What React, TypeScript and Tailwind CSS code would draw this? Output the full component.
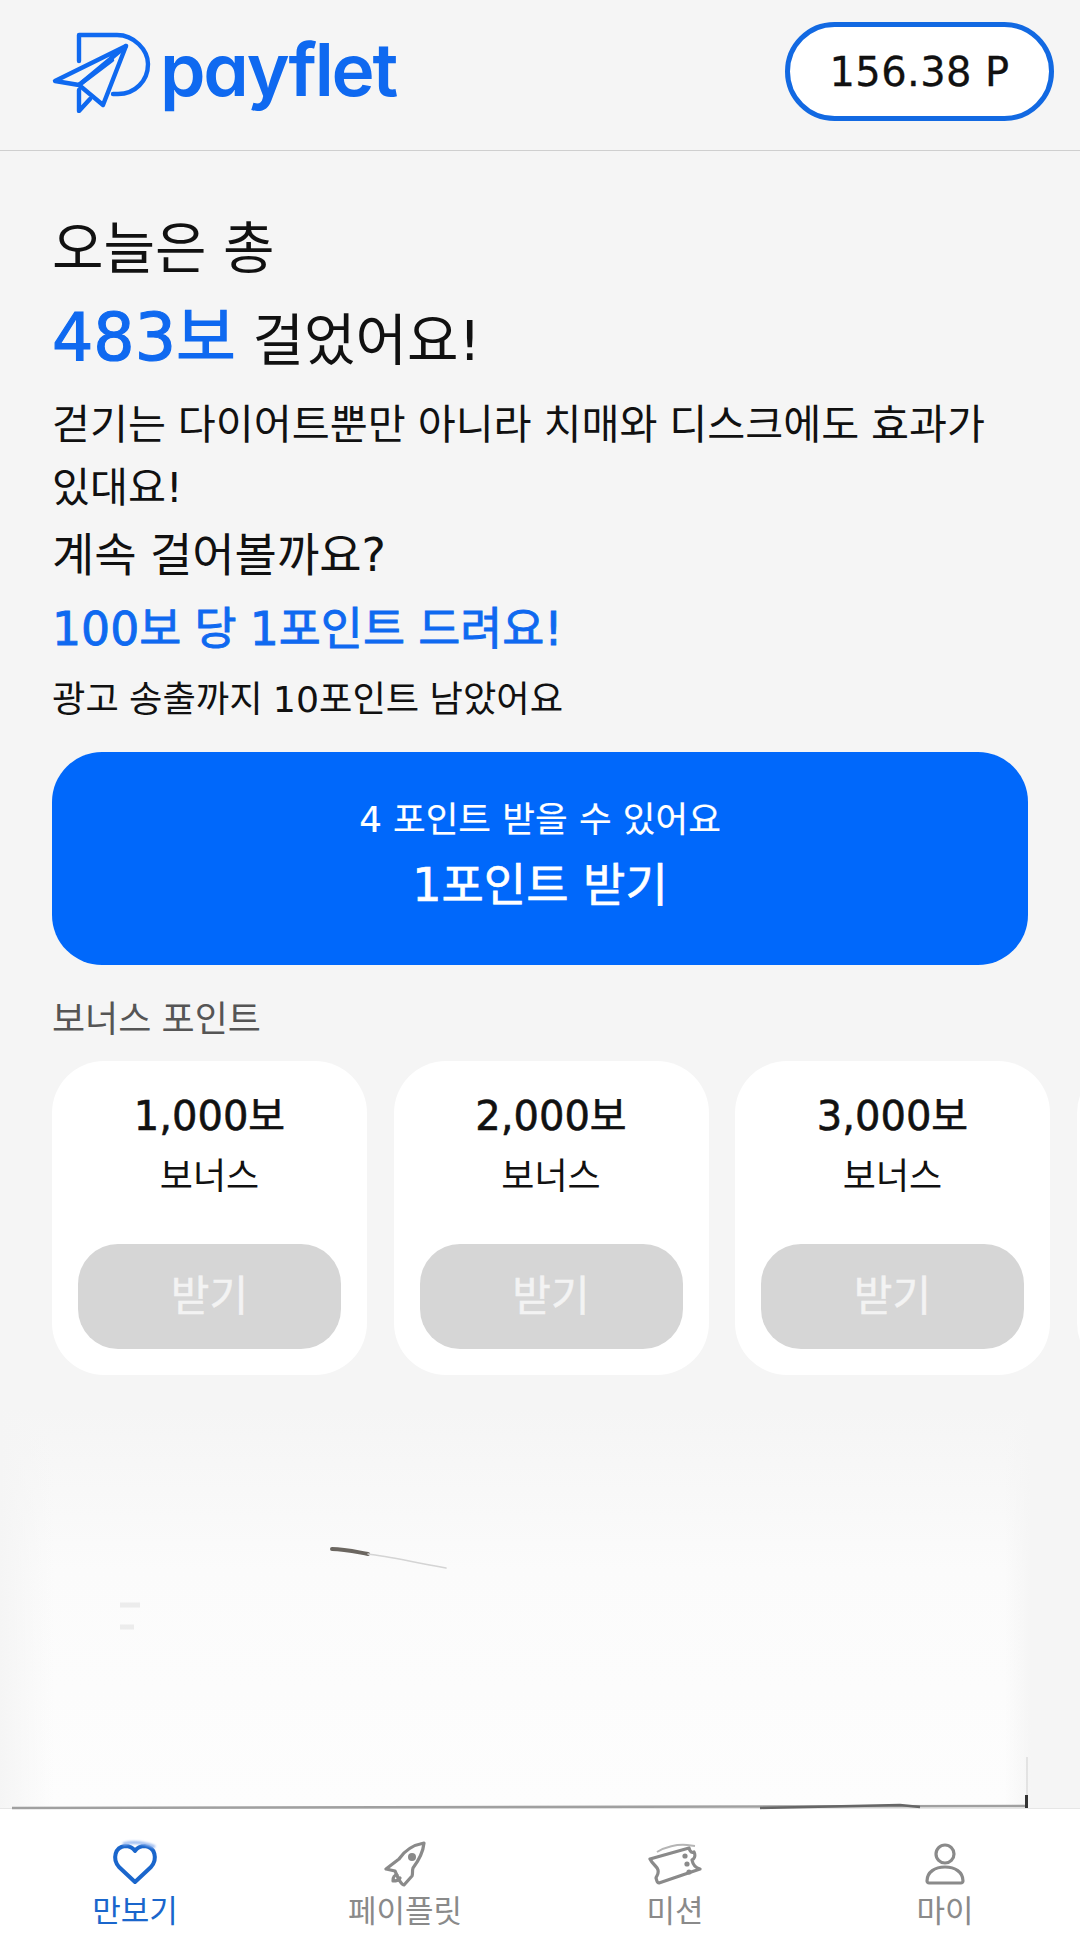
const bonusSteps = ['1,000보', '2,000보', '3,000보'];

function Logo() {
  return (
    <div className="flex items-center">
      <svg width="100" height="82" viewBox="0 0 100 82" fill="none" stroke="#0f69f0" strokeWidth="4.4" strokeLinecap="round" strokeLinejoin="round" className="shrink-0">
        <path d="M27 30V4h38c17 0 31 15 31 29 0 17-13 30-30 30h-5" />
        <path d="M74 15 3 50l24 4z" />
        <path d="M60 29 27 54" />
        <path d="M27 54l24 20 23-59" />
        <path d="M27 59v21l11-12" />
      </svg>
      <span className="ml-[8px] -mt-[6px] text-[73px] leading-none font-semibold tracking-[-2.2px] text-[#0f69f0] [font-family:'Inter',sans-serif] [font-feature-settings:'cv11']">payflet</span>
    </div>
  );
}

function BonusCard({ label }: { label: string }) {
  return (
    <div className="flex h-[314px] w-[315px] shrink-0 flex-col items-center rounded-[52px] bg-white px-[26px] pt-[30px]">
      <p className="text-[40px] leading-[50px] text-[#111] [-webkit-text-stroke-width:0.6px]">{label}</p>
      <p className="mt-[12px] text-[36px] leading-[48px] text-[#111]">보너스</p>
      <button className="mt-auto mb-[26px] h-[105px] w-full rounded-[40px] bg-[#d6d6d6] text-[42px] text-[#f3f3f3] [-webkit-text-stroke-width:0.5px]">받기</button>
    </div>
  );
}

function NavItem({ label, active, children }: { label: string; active?: boolean; children: React.ReactNode }) {
  return (
    <div className="flex flex-col items-center">
      <div className="flex h-[46px] items-center justify-center">{children}</div>
      <span className={active ? 'mt-[4px] text-[31px] leading-[40px] text-[#1a66cc]' : 'mt-[4px] text-[31px] leading-[40px] text-[#8a8a8a]'}>{label}</span>
    </div>
  );
}

export default function App() {
  return (
    <div className="flex h-[1945px] w-[1080px] flex-col overflow-hidden bg-[#f5f5f5] [word-spacing:-0.08em] [font-family:'DejaVu_Sans','Noto_Sans_CJK_KR',sans-serif]">
      <header className="flex h-[151px] shrink-0 items-start justify-between border-b border-[#cfcfcf] pt-[22px] pr-[26px] pl-[52px]">
        <div className="pt-[9px]">
          <Logo />
        </div>
        <div className="flex h-[99px] w-[269px] items-center justify-center rounded-full border-[5px] border-[#1269e2] bg-white text-[40px] tracking-[0.4px] text-[#111] [word-spacing:0] [-webkit-text-stroke-width:0.3px]">156.38 P</div>
      </header>

      <main className="shrink-0 px-[52px] pt-[65px]">
        <h1 className="text-[56px] leading-[66px] text-[#111]">오늘은 총</h1>
        <p className="mt-[21px] text-[56px] leading-[70px] text-[#111]">
          <span className="text-[65px] text-[#0f69f0] [-webkit-text-stroke-width:1.2px]">483보</span> 걸었어요!
        </p>
        <p className="mt-[18px] w-[960px] text-[41.3px] leading-[63px] text-[#111]">걷기는 다이어트뿐만 아니라 치매와 디스크에도 효과가 있대요!</p>
        <p className="mt-[2px] text-[46px] leading-[66px] text-[#111]">계속 걸어볼까요?</p>
        <p className="mt-[9px] text-[45.7px] leading-[66px] text-[#0f69f0] [-webkit-text-stroke-width:0.9px]">100보 당 1포인트 드려요!</p>
        <p className="mt-[10px] text-[36.3px] leading-[54px] text-[#111]">광고 송출까지 10포인트 남았어요</p>

        <button className="mt-[25px] flex h-[213px] w-[976px] flex-col items-center justify-center rounded-[50px] bg-[#0068fb] text-white">
          <span className="-mt-[7px] text-[35.5px] leading-[50px] [-webkit-text-stroke-width:0.2px]">4 포인트 받을 수 있어요</span>
          <span className="mt-[10px] text-[46px] leading-[60px] [-webkit-text-stroke-width:0.7px]">1포인트 받기</span>
        </button>

        <p className="mt-[30px] text-[36px] leading-[50px] text-[#555]">보너스 포인트</p>
        <div className="mt-[16px] -mr-[52px] flex gap-[26.5px]">
          {bonusSteps.map((label) => (
            <BonusCard key={label} label={label} />
          ))}
          <div className="h-[314px] w-[315px] shrink-0 rounded-[52px] bg-white" />
        </div>
      </main>

      <div className="relative min-h-0 flex-1">
        <div className="h-full bg-[linear-gradient(90deg,#f5f5f5_0,transparent_5%,transparent_93%,#f5f5f5_95.5%),linear-gradient(180deg,#f5f5f5_8%,#fbfbfb_45%,#fdfdfd_100%)]" />
        <svg width="1080" height="436" viewBox="0 0 1080 436" fill="none" className="absolute top-0 left-0 blur-[0.6px]">
          <path d="M332 174c12 0 20 2 36 5" stroke="#6b6660" strokeWidth="4" strokeLinecap="round" />
          <path d="M368 179c18 2 30 5 78 14" stroke="#d4d4d4" strokeWidth="1.5" strokeLinecap="round" />
          <path d="M120 230h20M120 252h14" stroke="#ececec" strokeWidth="5" />
          <path d="M12 433c300-2 600-2 1016-2" stroke="#a0a0a0" strokeWidth="2.5" />
          <path d="M760 433l140-3 20 2" stroke="#666" strokeWidth="2.5" />
          <path d="M1027 382v50" stroke="#cfcfcf" strokeWidth="1" />
          <path d="M1025 420h3v13h-3z" fill="#333" />
        </svg>
      </div>

      <nav className="grid h-[137px] shrink-0 grid-cols-4 border-t border-[#e6e6e6] bg-white pt-[32px]">
        <NavItem label="만보기" active>
          <svg width="44" height="42" viewBox="0 0 44 42" fill="none" stroke="#1a66cc" strokeWidth="4" strokeLinejoin="round" className="overflow-visible">
            <path d="M22 39 6 24C-1 16 2 4 12 3c5 0 8 2 10 5 2-3 5-5 10-5 10 1 13 13 6 21z" />
            <path d="M10 1c8-2 20-2 32 3" stroke="#9dbcf0" strokeWidth="3" className="blur-[1px]" />
          </svg>
        </NavItem>
        <NavItem label="페이플릿">
          <svg width="42" height="46" viewBox="0 0 42 46" fill="none" stroke="#8a8a8a" strokeWidth="3.2" strokeLinejoin="round" strokeLinecap="round">
            <path d="M40 2C29 4 21 9 15 18L2 28l9 2 4 9c1 1 3 5 5 5l8-9c1-2 0-5 1-8C35 19 39 12 40 2z" />
            <path d="M13 34c-3 0-4 2-4 6 3 0 6-1 7-3" />
            <circle cx="28" cy="16" r="4" fill="#8a8a8a" stroke="none" />
          </svg>
        </NavItem>
        <NavItem label="미션">
          <svg width="54" height="44" viewBox="0 0 54 44" fill="none" stroke="#8a8a8a" strokeWidth="3.2" strokeLinejoin="round">
            <path d="M2 17 41 6c1 4 3 5 5 4 2 4 0 7-2 8 1 5 4 8 8 9L11 41c-2 0-2-2-3-5 0-2 3-3 2-8-1-4-5-5-8-11z" />
            <path d="M9 10c8-5 20-8 30-7l8 1" stroke="#b5b5b5" strokeWidth="2" />
            <circle cx="37" cy="14" r="2.6" fill="#8a8a8a" stroke="none" />
            <circle cx="39" cy="22" r="2.6" fill="#8a8a8a" stroke="none" />
            <circle cx="41" cy="30" r="2.6" fill="#8a8a8a" stroke="none" />
          </svg>
        </NavItem>
        <NavItem label="마이">
          <svg width="40" height="42" viewBox="0 0 40 42" fill="none" stroke="#8a8a8a" strokeWidth="3.2" strokeLinejoin="round">
            <circle cx="20" cy="11" r="9" />
            <path d="M2 38c0-9 8-14 18-14s18 5 18 14c0 1-1 2-2 2H4c-1 0-2-1-2-2z" />
          </svg>
        </NavItem>
      </nav>
    </div>
  );
}
